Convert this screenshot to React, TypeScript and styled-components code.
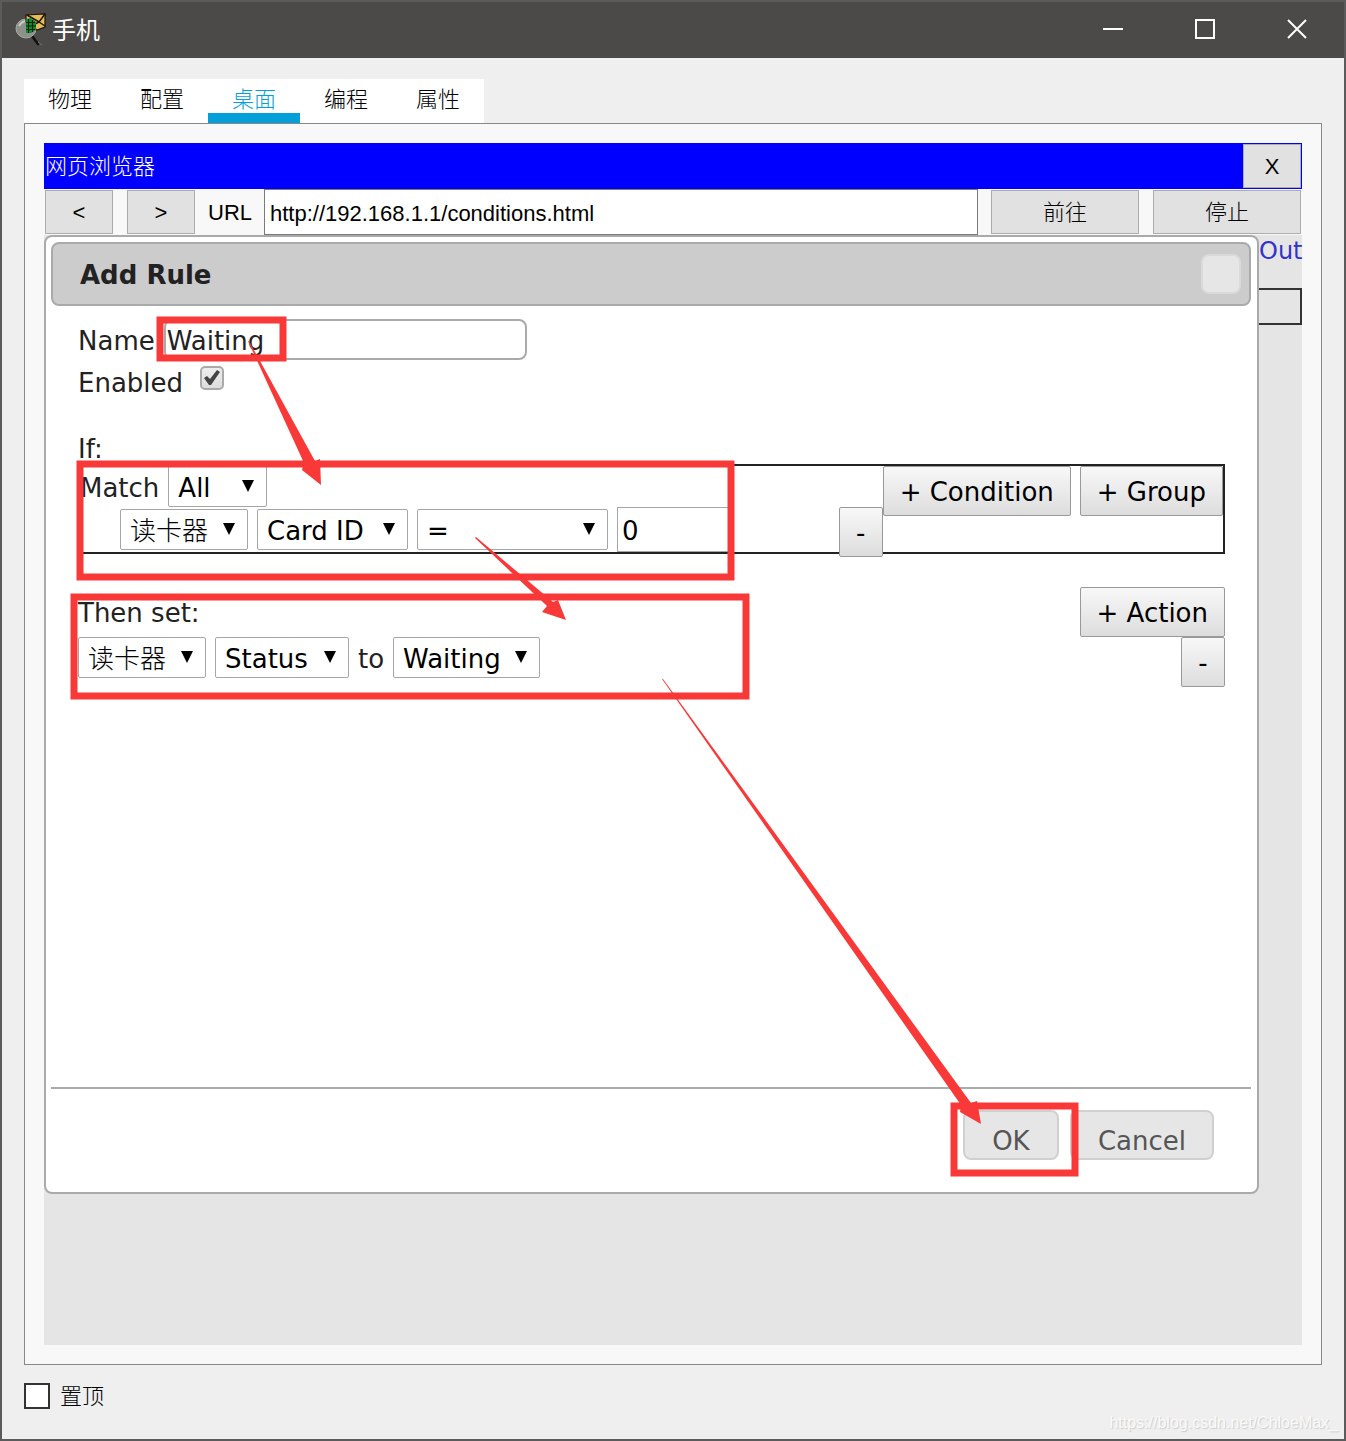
import React, { useState } from "react";
import styled, { createGlobalStyle, css } from "styled-components";

const sans = `"Liberation Sans", "Noto Sans CJK SC", sans-serif`;
const wide = `"DejaVu Sans", "Noto Sans CJK SC", sans-serif`;

const GlobalStyle = createGlobalStyle`
  *, *::before, *::after { box-sizing: border-box; }
  body { margin: 0; }
  button, input, select { margin: 0; font: inherit; color: inherit; }
`;

const Window = styled.div`
  position: relative;
  display: flex;
  flex-direction: column;
  min-height: 100vh;
  border: 2px solid #5b5b5b;
  background: #efefef;
  color: #000;
  font: 300 22px/30px ${sans};
`;

const TitleBar = styled.header`
  display: flex;
  align-items: center;
  height: 56px;
  padding: 0 1px 0 12px;
  background: #4c4a48;
  color: #fff;
`;

const Title = styled.h1`
  flex: 1;
  margin: 0 0 0 4px;
  padding-top: 2px;
  font-size: 24px;
  font-weight: 400;
`;

const WindowButton = styled.button`
  display: flex;
  align-items: center;
  justify-content: center;
  width: 92px;
  height: 56px;
  padding: 0 0 2px;
  border: 0;
  background: transparent;
`;

const Body = styled.main`
  display: flex;
  flex: 1;
  flex-direction: column;
  padding: 21px 22px 27px;
`;

const Tabs = styled.nav`
  display: flex;
  align-self: flex-start;
  background: #fff;
`;

const Tab = styled.button<{ $active?: boolean }>`
  width: 92px;
  height: 44px;
  padding: 8px 0 0;
  border: 0;
  border-bottom: 10px solid ${(p) => (p.$active ? "#049fd9" : "transparent")};
  background: transparent;
  color: ${(p) => (p.$active ? "#049fd9" : "#000")};
  line-height: 26px;
`;

const Panel = styled.section`
  display: flex;
  flex: 1;
  flex-direction: column;
  padding: 19px;
  border: 1px solid #888;
  background: #f8f8f8;
`;

const BrowserTitle = styled.div`
  display: flex;
  align-items: center;
  justify-content: space-between;
  height: 46px;
  padding: 1px;
  background: #00f;
  color: #fff;
`;

const FlatButton = styled.button<{ $width: number }>`
  flex: none;
  width: ${(p) => p.$width}px;
  height: 44px;
  padding: 2px 0 0;
  border: 1px solid #adadad;
  background: #e1e1e1;
  color: #000;
`;

const Toolbar = styled.form`
  display: flex;
  align-items: center;
  gap: 14px;
  height: 46px;
  padding: 0 1px;
`;

const UrlField = styled.label`
  display: flex;
  flex: 1;
  align-items: center;
  gap: 12px;
  margin: 0 -1px;
`;

const Text = styled.span`
  padding-top: 2px;
`;

const UrlInput = styled.input`
  flex: 1;
  min-width: 0;
  height: 46px;
  padding: 3px 5px 0;
  border: 1px solid #7a7a7a;
  background: #fff;
`;

const Page = styled.div`
  display: flex;
  flex: 1;
  background: #e5e5e5;
  font: 26px/30px ${wide};
`;

const Dialog = styled.section`
  display: flex;
  flex: 1;
  flex-direction: column;
  margin-bottom: 151px;
  padding: 5px 6px 5px 5px;
  border: 2px solid #aaa;
  border-radius: 8px;
  background: #fff;
  color: #222;
`;

const DialogHeader = styled.div`
  display: flex;
  align-items: center;
  justify-content: space-between;
  height: 64px;
  padding: 0 8px 0 27px;
  border: 2px solid #aaa;
  border-radius: 8px;
  background: #ccc;
`;

const DialogTitle = styled.h2`
  margin: 0;
  padding-top: 2px;
  font-size: 26px;
  font-weight: 700;
`;

const DialogClose = styled.button`
  width: 40px;
  height: 40px;
  border: 2px solid #dadada;
  border-radius: 8px;
  background: #e6e6e6;
`;

const RuleForm = styled.div`
  flex: 1;
  padding: 13px 26px 0 27px;
`;

const Field = styled.div<{ $gap: number }>`
  display: flex;
  align-items: flex-start;
  gap: ${(p) => p.$gap}px;
  height: 42px;
  line-height: 44px;
`;

const NameInput = styled.input`
  width: 363px;
  height: 41px;
  padding: 3px 1px 0;
  border: 2px solid #aaa;
  border-radius: 8px;
  background: #fff;
`;

const CheckHolder = styled.span`
  position: relative;
  display: flex;
  padding-top: 5px;

  svg {
    position: absolute;
    left: 3px;
    bottom: 4px;
    pointer-events: none;
  }
`;

const RoundCheck = styled.input`
  width: 24px;
  height: 24px;
  appearance: none;
  border: 2px solid #aaa;
  border-radius: 5px;
  background: linear-gradient(#eee, #ddd);
`;

const Caption = styled.div`
  margin-top: 31px;
  height: 30px;
`;

const ConditionBox = styled.div`
  display: flex;
  align-items: flex-start;
  height: 90px;
  border: 2px solid #222;
`;

const Conditions = styled.div`
  flex: 1;
`;

const Row = styled.div<{ $indent?: number }>`
  display: flex;
  align-items: center;
  gap: 9px;
  padding-left: ${(p) => p.$indent ?? 0}px;
`;

const PushRight = styled.div`
  align-self: flex-start;
  height: 45px;
  margin-left: auto;
`;

const gradient = css`
  border: 1px solid #999;
  border-radius: 2px;
  background: linear-gradient(#f8f8f8, #ddd);
`;

const GreyButton = styled.button`
  min-width: 44px;
  height: 50px;
  padding: 2px 16px 0;
  color: #000;
  white-space: nowrap;
  ${gradient}
`;

const ButtonPair = styled.div`
  display: flex;
  gap: 9px;
`;

const SelectHolder = styled.span<{ $width: number }>`
  position: relative;
  display: flex;
  width: ${(p) => p.$width}px;

  svg {
    position: absolute;
    top: 14px;
    right: 13px;
    pointer-events: none;
  }
`;

const SelectBox = styled.select<{ $light?: boolean }>`
  width: 100%;
  height: 41px;
  padding: 2px 0 0 9px;
  appearance: none;
  border: 1px solid #a6a6a6;
  border-radius: 2px;
  background: #fff;
  color: #000;
  font-family: ${(p) => (p.$light ? sans : wide)};
  font-weight: ${(p) => (p.$light ? 300 : 400)};
`;

const ValueInput = styled.input`
  width: 114px;
  height: 45px;
  padding: 2px 3px 0 4px;
  border: 1px solid #a6a6a6;
  background: #fff;
  color: #000;
`;

const ActionHead = styled.div`
  display: flex;
  align-items: center;
  justify-content: space-between;
  margin-top: 33px;
`;

const ActionRow = styled.div`
  display: flex;
  align-items: flex-start;
  justify-content: space-between;
`;

const Footer = styled.footer`
  display: flex;
  justify-content: flex-end;
  gap: 11px;
  height: 100px;
  padding: 21px 37px 0 0;
  border-top: 2px solid #aaa;
`;

const FooterButton = styled.button`
  min-width: 96px;
  height: 50px;
  padding: 12px 26px 0;
  border: 2px solid #d0d0d0;
  border-radius: 8px;
  background: #e6e6e6;
  color: #555;
`;

const Behind = styled.div`
  width: 43px;
`;

const LogOut = styled.a`
  display: block;
  height: 53px;
  padding-top: 1px;
  color: #33c;
  font-size: 24px;
  text-decoration: none;
`;

const BehindBox = styled.div`
  height: 37px;
  border: 2px solid #333;
  border-left: 0;
`;

const TopLabel = styled.label`
  display: flex;
  align-items: center;
  gap: 10px;
  margin-top: 15px;
`;

const SquareCheck = styled.input`
  width: 26px;
  height: 26px;
  appearance: none;
  border: 2px solid #333;
  background: #fff;
`;

const Watermark = styled.div`
  position: absolute;
  right: 6px;
  bottom: 5px;
  color: #fafafa;
  font: 16px/22px ${sans};
  text-shadow: 1px 1px 1px #ccc;
`;

const Marks = styled.svg`
  position: absolute;
  top: -2px;
  left: -2px;
  pointer-events: none;
`;

function AppIcon() {
  return (
    <svg width="34" height="34" viewBox="0 0 34 34" aria-hidden="true">
      <path d="M18 23l6 8" stroke="#111" strokeWidth="2.5" strokeLinecap="round" />
      <path d="M24 29l4 3" stroke="#777" strokeWidth="1" />
      <ellipse cx="12" cy="15.5" rx="10" ry="9.5" fill="#8d918c" stroke="#aaa9a2" />
      <path d="M5 13q3-5 8-5" stroke="#c9cbc5" strokeWidth="2" fill="none" />
      <path d="M12 2l19-1v13l-8 3-11-8z" fill="#e9bb57" stroke="#181410" strokeWidth="1.2" />
      <path d="M13 2l12 7 6-8M21 11l4-2 6 4" fill="none" stroke="#181410" strokeWidth="1.5" />
      <path d="M12 6l5-1 5 4v8l-5 3-5 0z" fill="#0f8a2e" />
      <path d="M14.500 6v14M18.500 7v12M12 9.500h9M12 13h10M12 16.500h9" stroke="#04210b" strokeWidth="1" />
    </svg>
  );
}

type PickProps = { label: string; width: number; options: string[]; light?: boolean };

function Pick({ label, width, options, light }: PickProps) {
  return (
    <SelectHolder $width={width}>
      <SelectBox aria-label={label} $light={light}>
        {options.map((o) => (
          <option key={o}>{o}</option>
        ))}
      </SelectBox>
      <svg width="12" height="12" viewBox="0 0 12 12" aria-hidden="true">
        <path d="M0 0h12L6 12z" fill="#000" />
      </svg>
    </SelectHolder>
  );
}

const tabs = ["物理", "配置", "桌面", "编程", "属性"];

export default function App() {
  const [tab, setTab] = useState("桌面");
  return (
    <Window>
      <GlobalStyle />
      <TitleBar>
        <AppIcon />
        <Title>手机</Title>
        <WindowButton aria-label="最小化">
          <svg width="20" height="20"><path d="M0 10h20" stroke="#fff" strokeWidth="2" /></svg>
        </WindowButton>
        <WindowButton aria-label="最大化">
          <svg width="20" height="20"><path d="M1 1h18v18H1z" fill="none" stroke="#fff" strokeWidth="2" /></svg>
        </WindowButton>
        <WindowButton aria-label="关闭">
          <svg width="20" height="20"><path d="M1 1l18 18M19 1L1 19" stroke="#fff" strokeWidth="2" /></svg>
        </WindowButton>
      </TitleBar>
      <Body>
        <Tabs>
          {tabs.map((t) => (
            <Tab key={t} $active={t === tab} onClick={() => setTab(t)}>{t}</Tab>
          ))}
        </Tabs>
        <Panel>
          <BrowserTitle>
            <Text>网页浏览器</Text>
            <FlatButton $width={58}>X</FlatButton>
          </BrowserTitle>
          <Toolbar onSubmit={(e) => e.preventDefault()}>
            <FlatButton type="button" $width={68}>&lt;</FlatButton>
            <FlatButton type="button" $width={68}>&gt;</FlatButton>
            <UrlField>
              <Text>URL</Text>
              <UrlInput defaultValue="http://192.168.1.1/conditions.html" />
            </UrlField>
            <FlatButton $width={148}>前往</FlatButton>
            <FlatButton type="button" $width={148}>停止</FlatButton>
          </Toolbar>
          <Page>
            <Dialog role="dialog" aria-labelledby="dialog-title">
              <DialogHeader>
                <DialogTitle id="dialog-title">Add Rule</DialogTitle>
                <DialogClose aria-label="Close" />
              </DialogHeader>
              <RuleForm>
                <Field $gap={9}>
                  <label htmlFor="rule-name">Name</label>
                  <NameInput id="rule-name" defaultValue="Waiting" />
                </Field>
                <Field $gap={17}>
                  <label htmlFor="rule-enabled">Enabled</label>
                  <CheckHolder>
                    <RoundCheck id="rule-enabled" type="checkbox" defaultChecked />
                    <svg width="18" height="17" viewBox="0 0 18 17" aria-hidden="true">
                      <path d="M1 9l3-2 3 3 7-9 3 2-9 13H6z" fill="#444" />
                    </svg>
                  </CheckHolder>
                </Field>
                <Caption>If:</Caption>
                <ConditionBox>
                  <Conditions>
                    <Row>
                      <Text>Match</Text>
                      <Pick label="Match" width={99} options={["All", "Any"]} />
                    </Row>
                    <Row $indent={40}>
                      <Pick label="Device" width={128} options={["读卡器"]} light />
                      <Pick label="Property" width={151} options={["Card ID", "Status"]} />
                      <Pick label="Operator" width={191} options={["=", "!="]} />
                      <ValueInput aria-label="Value" defaultValue="0" />
                      <PushRight>
                        <GreyButton aria-label="Remove condition">-</GreyButton>
                      </PushRight>
                    </Row>
                  </Conditions>
                  <ButtonPair>
                    <GreyButton>+ Condition</GreyButton>
                    <GreyButton>+ Group</GreyButton>
                  </ButtonPair>
                </ConditionBox>
                <ActionHead>
                  <Text>Then set:</Text>
                  <GreyButton>+ Action</GreyButton>
                </ActionHead>
                <ActionRow>
                  <Row>
                    <Pick label="Target device" width={128} options={["读卡器"]} light />
                    <Pick label="Target property" width={134} options={["Status"]} />
                    <Text>to</Text>
                    <Pick label="Target value" width={147} options={["Waiting", "Valid", "Invalid"]} />
                  </Row>
                  <GreyButton aria-label="Remove action">-</GreyButton>
                </ActionRow>
              </RuleForm>
              <Footer>
                <FooterButton>OK</FooterButton>
                <FooterButton>Cancel</FooterButton>
              </Footer>
            </Dialog>
            <Behind>
              <LogOut href="#out">Out</LogOut>
              <BehindBox />
            </Behind>
          </Page>
        </Panel>
        <TopLabel>
          <SquareCheck type="checkbox" />
          <Text>置顶</Text>
        </TopLabel>
      </Body>
      <Watermark>https://blog.csdn.net/ChloeMax_</Watermark>
      <Marks width="1100" height="1200" viewBox="0 0 1100 1200" aria-hidden="true">
        <g fill="none" stroke="#f93838" strokeWidth="7">
          <rect x="160" y="320" width="123" height="38" />
          <rect x="80" y="464" width="651" height="113" />
          <rect x="74" y="597" width="672" height="99" />
          <rect x="954" y="1106" width="121" height="67" />
        </g>
        <g fill="#f93838">
          <path d="M248 341L249 341L315 461L320 459L321 485L302 470L304 463Z" />
          <path d="M475 538L476 537L553 602L558 600L566 620L542 612L547 606Z" />
          <path d="M662 679L663 679L971 1103L977 1101L981 1124L960 1112L961 1105Z" />
        </g>
      </Marks>
    </Window>
  );
}
